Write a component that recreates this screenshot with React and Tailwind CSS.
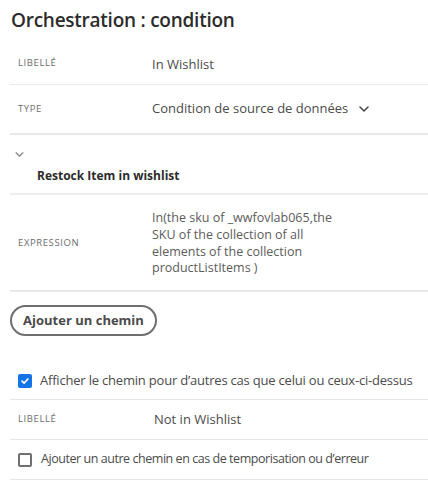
import React from "react";

function Chevron({ className }) {
  return (
    <svg viewBox="0 0 10 6" className={className} fill="none" stroke="currentColor" strokeWidth="1.6" strokeLinecap="round" strokeLinejoin="round">
      <path d="M1 1l4 4 4-4" />
    </svg>
  );
}

export default function App() {
  return (
    <div className="w-[428px] h-[494px] bg-white pl-[10px] font-['Open_Sans',sans-serif] text-[#4b4b4b]">
      <h1 className="h-[42px] pt-[6px] pl-[1px] text-[19px] tracking-[-0.25px] font-semibold text-[#2c2c2c] leading-[28px]">
        Orchestration : condition
      </h1>

      <div className="flex items-center h-[43px] border-b border-[#ebebeb]">
        <div className="w-[142px] shrink-0 pl-[8px] text-[9.5px] tracking-[0.6px] text-[#6e6e6e] uppercase">Libellé</div>
        <div className="text-[13px] pt-[4px]">In Wishlist</div>
      </div>

      <div className="flex items-center h-[50px] border-b-2 border-[#e8e8e8]">
        <div className="w-[142px] shrink-0 pl-[8px] text-[9.5px] tracking-[0.6px] text-[#6e6e6e] uppercase">Type</div>
        <div className="flex items-center text-[13px]">
          <span>Condition de source de données</span>
          <Chevron className="w-[10px] h-[6px] ml-[11px] text-[#4b4b4b]" />
        </div>
      </div>

      <div className="h-[60px] border-b-2 border-[#ededed] pt-[17px]">
        <Chevron className="w-[9px] h-[5px] ml-[5px] text-[#8a8a8a]" />
        <div className="pl-[27px] pt-[10px] text-[12px] font-bold text-[#2c2c2c]">Restock Item in wishlist</div>
      </div>

      <div className="flex items-center h-[97px] pt-[2px] border-b-2 border-[#e8e8e8]">
        <div className="w-[142px] shrink-0 pl-[8px] text-[9.5px] tracking-[0.6px] text-[#6e6e6e] uppercase">Expression</div>
        <div className="w-[190px] shrink-0 text-[12.5px] leading-[16.7px] text-[#5c5c5c]">
          In(the sku of _wwfovlab065,the SKU of the collection of all elements of the collection productListItems )
        </div>
      </div>

      <div className="pt-[13px]">
        <button className="h-[31px] w-[147px] rounded-full border-2 border-[#6e6e6e] text-[13px] font-bold text-[#4b4b4b] leading-none">
          Ajouter un chemin
        </button>
      </div>

      <div className="flex items-center h-[64px] pt-[26px] pl-[8px] border-b border-[#e6e6e6]">
        <span className="w-[14px] h-[14px] shrink-0 rounded-[2px] bg-[#1473e6] flex items-center justify-center">
          <svg viewBox="0 0 12 12" className="w-[10px] h-[10px]" fill="none" stroke="white" strokeWidth="2" strokeLinecap="round" strokeLinejoin="round">
            <path d="M2.5 6.2l2.4 2.4 4.6-5" />
          </svg>
        </span>
        <span className="ml-[8px] text-[13px] tracking-[-0.2px]">Afficher le chemin pour d’autres cas que celui ou ceux-ci-dessus</span>
      </div>

      <div className="flex items-center h-[40px] border-b border-[#e6e6e6]">
        <div className="w-[144px] shrink-0 pl-[8px] text-[9.5px] tracking-[0.6px] text-[#6e6e6e] uppercase">Libellé</div>
        <div className="text-[13px]">Not in Wishlist</div>
      </div>

      <div className="flex items-center h-[40px] pl-[8px] border-b border-[#e6e6e6]">
        <span className="w-[14px] h-[14px] shrink-0 rounded-[2px] border-2 border-[#707070] bg-white"></span>
        <span className="ml-[9px] text-[12.5px] tracking-[-0.45px]">Ajouter un autre chemin en cas de temporisation ou d’erreur</span>
      </div>
    </div>
  );
}
